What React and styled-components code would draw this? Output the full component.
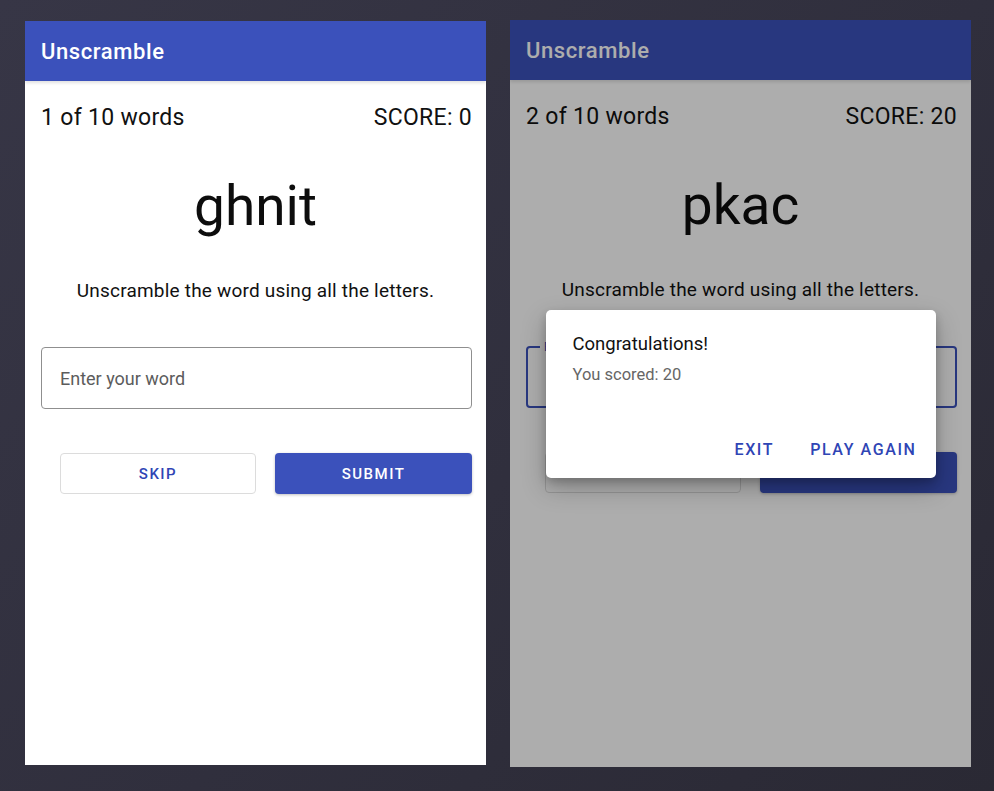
import React from "react";
import styled, { createGlobalStyle } from "styled-components";

const GlobalStyle = createGlobalStyle`
  html, body {
    margin: 0;
    padding: 0;
    width: 994px;
    height: 791px;
    overflow: hidden;
  }
  body {
    font-family: Roboto, "Liberation Sans", sans-serif;
    background: linear-gradient(135deg, #373646 0%, #302f3d 55%, #2a2934 100%);
  }
`;

export default function App() {
  return (
    <>
      <GlobalStyle />
      <Stage>
        <Phone top="21px" height="744px">
          <GameScreen word="ghnit" count={1} score={0} />
        </Phone>
        <Phone top="20px" height="747px">
          <GameScreen word="pkac" count={2} score={20} focused />
          <Scrim>
            <Dialog>
              <DialogTitle>Congratulations!</DialogTitle>
              <DialogText>You scored: 20</DialogText>
              <DialogActions>
                <TextButton>Exit</TextButton>
                <TextButton>Play Again</TextButton>
              </DialogActions>
            </Dialog>
          </Scrim>
        </Phone>
      </Stage>
    </>
  );
}

function GameScreen({ word, count, score, focused }) {
  return (
    <>
      <AppBar>Unscramble</AppBar>
      <Body>
        <Stats>
          <span>{count} of 10 words</span>
          <span>SCORE: {score}</span>
        </Stats>
        <Word>{word}</Word>
        <Hint>Unscramble the word using all the letters.</Hint>
        <Field focused={focused}>
          {focused ? (
            <>
              <FloatLabel>Enter your word</FloatLabel>
              <Caret />
            </>
          ) : (
            <Placeholder>Enter your word</Placeholder>
          )}
        </Field>
        <Buttons>
          <OutlineButton>Skip</OutlineButton>
          <FilledButton>Submit</FilledButton>
        </Buttons>
      </Body>
    </>
  );
}

const Stage = styled.div`
  display: flex;
  align-items: flex-start;
  gap: 24px;
  padding-left: 25px;
`;

const Phone = styled.div`
  position: relative;
  margin-top: ${(p) => p.top};
  width: 461px;
  height: ${(p) => p.height};
  background: #ffffff;
  display: flex;
  flex-direction: column;
  overflow: hidden;
`;

const AppBar = styled.div`
  height: 60px;
  flex-shrink: 0;
  background: #3b51bb;
  color: #ffffff;
  font-size: 22px;
  font-weight: 500;
  letter-spacing: 0.6px;
  display: flex;
  align-items: center;
  padding-left: 16px;
  box-shadow: 0 2px 3px rgba(0, 0, 0, 0.12);
  position: relative;
  z-index: 1;
`;

const Body = styled.div`
  display: flex;
  flex-direction: column;
`;

const Stats = styled.div`
  display: flex;
  justify-content: space-between;
  padding: 23px 14px 0 16px;
  font-size: 23px;
  letter-spacing: 0.3px;
  color: #111111;
  line-height: 28px;
`;

const Word = styled.div`
  margin-top: 42px;
  text-align: center;
  font-size: 55px;
  line-height: 64px;
  color: #0d0d0d;
`;

const Hint = styled.div`
  margin-top: 41px;
  text-align: center;
  font-size: 19px;
  letter-spacing: 0.2px;
  line-height: 24px;
  color: #111111;
`;

const Field = styled.div`
  position: relative;
  margin: 44px 14px 0 16px;
  height: 62px;
  box-sizing: border-box;
  border: ${(p) => (p.focused ? "2px solid #3b51bb" : "1px solid #8f8f8f")};
  border-radius: 4px;
  display: flex;
  align-items: center;
  padding-left: 18px;
`;

const Placeholder = styled.span`
  font-size: 18px;
  color: #5c5c5c;
`;

const FloatLabel = styled.span`
  position: absolute;
  top: -8px;
  left: 12px;
  padding: 0 4px;
  background: #ffffff;
  font-size: 12px;
  line-height: 14px;
  color: #3b51bb;
`;

const Caret = styled.span`
  width: 2px;
  height: 28px;
  background: #3b51bb;
`;

const Buttons = styled.div`
  display: flex;
  gap: 19px;
  margin-top: 44px;
  padding-left: 35px;
`;

const BaseButton = styled.button`
  flex: 0 0 197px;
  height: 41px;
  border-radius: 4px;
  font-family: Roboto, "Liberation Sans", sans-serif;
  font-size: 15px;
  font-weight: 500;
  letter-spacing: 1.5px;
  text-transform: uppercase;
  cursor: pointer;
`;

const OutlineButton = styled(BaseButton)`
  flex-basis: 196px;
  background: #ffffff;
  border: 1px solid #dcdcdc;
  color: #2f45b5;
`;

const FilledButton = styled(BaseButton)`
  background: #3b51bb;
  border: none;
  color: #ffffff;
  box-shadow: 0 1px 3px rgba(0, 0, 0, 0.25);
`;

const Scrim = styled.div`
  position: absolute;
  inset: 0;
  z-index: 2;
  background: rgba(0, 0, 0, 0.32);
  display: flex;
  align-items: center;
  justify-content: center;
`;

const Dialog = styled.div`
  width: 390px;
  height: 168px;
  box-sizing: border-box;
  background: #ffffff;
  border-radius: 5px;
  box-shadow: 0 10px 24px rgba(0, 0, 0, 0.25), 0 4px 8px rgba(0, 0, 0, 0.18);
  display: flex;
  flex-direction: column;
  padding: 22px 19px 14px 27px;
`;

const DialogTitle = styled.div`
  font-size: 18.5px;
  line-height: 24px;
  color: #111111;
`;

const DialogText = styled.div`
  margin-top: 9px;
  font-size: 16.5px;
  line-height: 20px;
  color: #666666;
`;

const DialogActions = styled.div`
  margin-top: auto;
  display: flex;
  justify-content: flex-end;
  gap: 36px;
`;

const TextButton = styled.span`
  font-size: 16px;
  font-weight: 500;
  letter-spacing: 1.6px;
  text-transform: uppercase;
  color: #2f45b5;
  line-height: 28px;
`;
